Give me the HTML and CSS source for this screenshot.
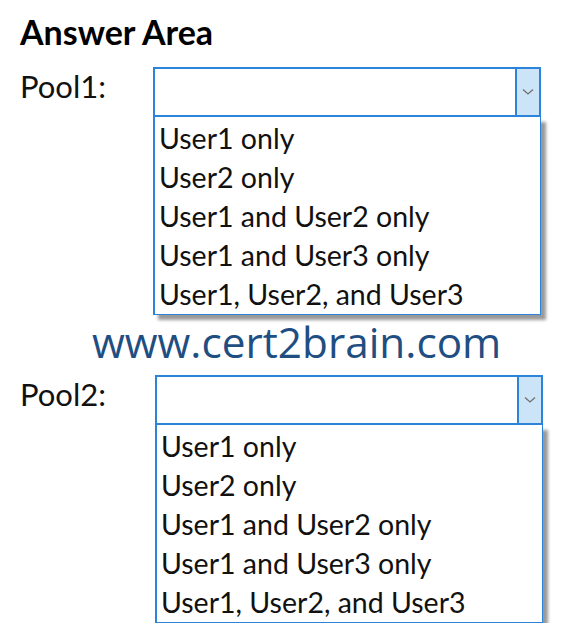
FILE: index.html
```html
<!DOCTYPE html>
<html lang="en">
<head>
    <meta charset="UTF-8">
    <title>Answer Area</title>
    <link rel="stylesheet" href="styles.css">
</head>
<body>

    <div class="area">
        <h1>Answer Area</h1>

        <!-- POOL 1 -->
        <div class="pool">
            <div class="label">Pool1:</div>
            <div class="dropdown">
                <div class="select">
                    <div class="value"></div>
                    <div class="arrow">
                        <svg width="12" height="8" viewBox="0 0 12 8"><path d="M1 1.5 L6 6 L11 1.5" fill="none" stroke="#707070" stroke-width="1.3"/></svg>
                    </div>
                </div>
                <ul class="list">
                    <li>User1 only</li>
                    <li>User2 only</li>
                    <li>User1 and User2 only</li>
                    <li>User1 and User3 only</li>
                    <li>User1, User2, and User3</li>
                </ul>
            </div>
        </div>

        <div class="watermark">www.cert2brain.com</div>

        <!-- POOL 2 -->
        <div class="pool pool2">
            <div class="label">Pool2:</div>
            <div class="dropdown">
                <div class="select">
                    <div class="value"></div>
                    <div class="arrow">
                        <svg width="12" height="8" viewBox="0 0 12 8"><path d="M1 1.5 L6 6 L11 1.5" fill="none" stroke="#707070" stroke-width="1.3"/></svg>
                    </div>
                </div>
                <ul class="list">
                    <li>User1 only</li>
                    <li>User2 only</li>
                    <li>User1 and User2 only</li>
                    <li>User1 and User3 only</li>
                    <li>User1, User2, and User3</li>
                </ul>
            </div>
        </div>
    </div>

</body>
</html>
```

FILE: styles.css
```css
* {
    margin: 0;
    padding: 0;
    box-sizing: border-box;
}

body {
    background: #fff;
    font-family: Lato, 'Liberation Sans', sans-serif;
    color: #111;
}

.area {
    padding: 12px 0 0 20px;
}

h1 {
    font-size: 34px;
    font-weight: 700;
    line-height: 40px;
    color: #000;
}

.pool {
    display: flex;
    margin-top: 15px;
}

.label {
    width: 133px;
    font-size: 31px;
    line-height: 38px;
}

.dropdown {
    width: 388px;
}

.select {
    display: flex;
    height: 50px;
    border: 2px solid #2b84d9;
}

.value {
    flex: 1;
}

.arrow {
    width: 24px;
    background: #cce4f7;
    border-left: 2px solid #2b84d9;
    display: flex;
    align-items: center;
    justify-content: center;
}

.list {
    list-style: none;
    border: 1px solid #2b84d9;
    border-left-width: 2px;
    border-top: none;
    box-shadow: 5px 5px 3px rgba(0, 0, 0, 0.4);
    padding: 2px 0 0 4px;
}

.list li {
    font-size: 28.5px;
    line-height: 39px;
}

.watermark {
    margin: 4px 0 0 72px;
    font-family: 'Open Sans', sans-serif;
    font-size: 42.3px;
    line-height: 46px;
    color: #1f4e82;
}

.pool2 {
    margin-top: 10px;
}

.pool2 .dropdown {
    margin-left: 2px;
}
```
